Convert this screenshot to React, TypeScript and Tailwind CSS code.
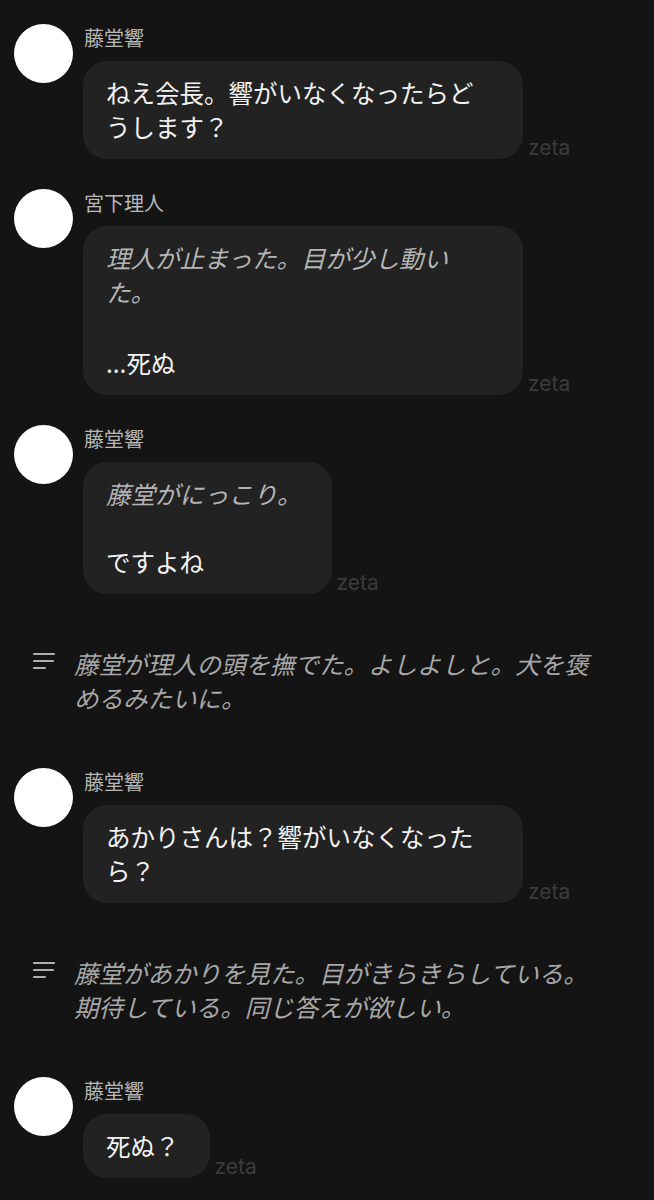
import type { ReactNode } from "react";

const FONT = { fontFamily: '"Noto Sans CJK JP", "Noto Sans", sans-serif' };

function Message({ name, children }: { name: string; children: ReactNode }) {
  return (
    <div className="flex gap-[10px] pl-[14px]">
      <div className="size-[59px] shrink-0 rounded-full bg-white" />
      <div className="flex min-w-0 flex-col">
        <div className="pl-px text-[20px] leading-[28px] text-[#b8b8b8]">{name}</div>
        <div className="mt-[9px] flex items-end gap-[5px]">
          <div className="max-w-[440px] rounded-[24px] bg-[#222222] py-[15px] pl-[23px] pr-[30px] text-[24.5px] leading-[34px] text-[#f2f2f2]">
            {children}
          </div>
          <span
            className="mb-[1px] text-[21px] leading-none text-[#3b3b3b]"
            style={{ fontFamily: "Inter, sans-serif" }}
          >
            zeta
          </span>
        </div>
      </div>
    </div>
  );
}

function Narration({ children }: { children: ReactNode }) {
  return (
    <div className="flex items-start gap-[19px] py-[23px] pl-[33px]">
      <svg width="22" height="18" viewBox="0 0 22 18" className="mt-[5px] shrink-0" fill="none">
        <path d="M1 2h20M1 9h19M1 16h11" stroke="#b0b0b0" strokeWidth="2.2" strokeLinecap="round" />
      </svg>
      <p className="max-w-[530px] text-[24.5px] italic leading-[34px] text-[#a8a8a8]">{children}</p>
    </div>
  );
}

export default function App() {
  return (
    <div className="min-h-[1200px] bg-[#141414] pt-[24px]" style={FONT}>
      <div className="flex flex-col gap-[30px]">
        <Message name="藤堂響">ねえ会長。響がいなくなったらどうします？</Message>

        <Message name="宮下理人">
          <p className="italic text-[#b5b5b5]">理人が止まった。目が少し動いた。</p>
          <p className="h-[37px]" />
          <p>...死ぬ</p>
        </Message>

        <Message name="藤堂響">
          <p className="italic text-[#b5b5b5]">藤堂がにっこり。</p>
          <p className="h-[34px]" />
          <p>ですよね</p>
        </Message>

        <Narration>藤堂が理人の頭を撫でた。よしよしと。犬を褒めるみたいに。</Narration>

        <Message name="藤堂響">あかりさんは？響がいなくなったら？</Message>

        <Narration>藤堂があかりを見た。目がきらきらしている。期待している。同じ答えが欲しい。</Narration>

        <Message name="藤堂響">死ぬ？</Message>
      </div>
    </div>
  );
}
